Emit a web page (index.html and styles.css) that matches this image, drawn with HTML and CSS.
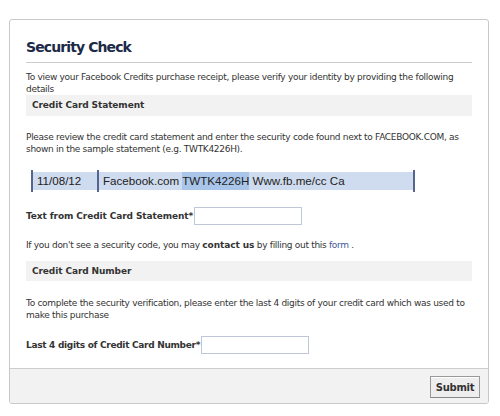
FILE: index.html
```html
<!DOCTYPE html>
<html>
<head>
<meta charset="utf-8">
<title>Security Check</title>
<link rel="stylesheet" href="styles.css">
</head>
<body>
<div class="page">
  <form class="card">
    <div class="card-body">
      <h1 class="title">Security Check</h1>
      <p class="intro">To view your Facebook Credits purchase receipt, please verify your identity by providing the following details</p>
      <div class="section-head">Credit Card Statement</div>
      <p class="text review">Please review the credit card statement and enter the security code found next to FACEBOOK.COM, as shown in the sample statement (e.g. TWTK4226H).</p>
      <div class="stmt">
        <span class="cell date">11/08/12</span>
        <span class="sep"></span>
        <span class="cell desc">Facebook.com <span class="hl">TWTK4226H</span> Www.fb.me/cc Ca</span>
      </div>
      <div class="field first-field">
        <label class="label" for="code">Text from Credit Card Statement*</label>
        <input class="input" id="code" type="text">
      </div>
      <p class="text help">If you don't see a security code, you may <b>contact us</b> by filling out this <a class="link" href="#">form</a> .</p>
      <div class="section-head second">Credit Card Number</div>
      <p class="text complete">To complete the security verification, please enter the last 4 digits of your credit card which was used to make this purchase</p>
      <div class="field last-field">
        <label class="label label-tight" for="digits">Last 4 digits of Credit Card Number*</label>
        <input class="input" id="digits" type="text">
      </div>
    </div>
    <div class="card-foot">
      <button class="submit" type="button">Submit</button>
    </div>
  </form>
</div>
</body>
</html>
```

FILE: styles.css
```css
* { box-sizing: border-box; }

html, body {
  margin: 0;
  padding: 0;
  background: #ffffff;
}

body {
  font-family: "DejaVu Sans", Verdana, sans-serif;
  font-size: 9px;
  letter-spacing: -0.3px;
  line-height: 12px;
  color: #333333;
}

.page {
  padding: 19px 11px 0 9px;
}

.card {
  display: block;
  width: 480px;
  margin: 0;
  border: 1px solid #c9c9c9;
  border-radius: 3px;
  background: #ffffff;
  overflow: hidden;
}

.card-body {
  padding: 18px 16px 14px 16px;
}

.title {
  margin: 0;
  padding: 0 0 6px 0;
  font-size: 14px;
  line-height: 18px;
  font-weight: bold;
  letter-spacing: -0.9px;
  color: #1c2a47;
  border-bottom: 1px solid #cccccc;
}

.intro {
  margin: 8px 0 0 0;
}

.section-head {
  height: 21px;
  line-height: 21px;
  padding-left: 6px;
  background: #f2f2f2;
  font-weight: bold;
  letter-spacing: -0.1px;
  color: #333333;
}

.section-head.second {
  margin-top: 10px;
  height: 20px;
  line-height: 20px;
}

.text {
  margin: 0;
}

.review {
  margin-top: 15px;
}

.stmt {
  display: flex;
  align-items: stretch;
  width: 384px;
  height: 22px;
  margin: 15px 0 0 5px;
  padding: 2px 0;
  background: #cfdbee;
  background-clip: content-box;
  border-left: 2px solid #56658f;
  border-right: 2px solid #56658f;
  font-family: "Liberation Sans", Arial, sans-serif;
  font-size: 11.6px;
  letter-spacing: 0;
  line-height: 18px;
  color: #222222;
}

.cell {
  display: block;
  white-space: nowrap;
}

.date {
  width: 64px;
  padding-left: 4px;
}

.sep {
  display: block;
  width: 2px;
  margin: -2px 0;
  background: #56658f;
}

.desc {
  padding-left: 4px;
}

.hl {
  display: inline-block;
  height: 18px;
  background: #a9c5ea;
}

.field {
  display: flex;
  align-items: center;
  gap: 1px;
}

.first-field {
  margin-top: 15px;
}

.last-field {
  margin-top: 15px;
}

.label {
  font-weight: bold;
  letter-spacing: -0.1px;
  color: #333333;
}

.label-tight {
  letter-spacing: -0.3px;
}

.input {
  width: 108px;
  height: 18px;
  margin: 0;
  padding: 1px 2px;
  border: 1px solid #bdc7d8;
  background: #ffffff;
  font: inherit;
}

.help {
  margin-top: 14px;
}

.help b {
  color: #333333;
  letter-spacing: -0.1px;
}

.link {
  color: #3b5998;
  text-decoration: none;
}

.complete {
  margin-top: 16px;
}

.card-foot {
  display: flex;
  justify-content: flex-end;
  padding: 7px 8px 5px 8px;
  border-top: 1px solid #cccccc;
  background: #f2f2f2;
}

.submit {
  width: 50px;
  height: 22px;
  margin: 0;
  padding: 0;
  border: 1px solid #999999;
  border-bottom-color: #888888;
  background: #eeeeee;
  box-shadow: inset 0 1px 0 #ffffff;
  font-family: "DejaVu Sans", Verdana, sans-serif;
  font-size: 10px;
  font-weight: bold;
  letter-spacing: -0.3px;
  color: #333333;
  cursor: pointer;
}
```
